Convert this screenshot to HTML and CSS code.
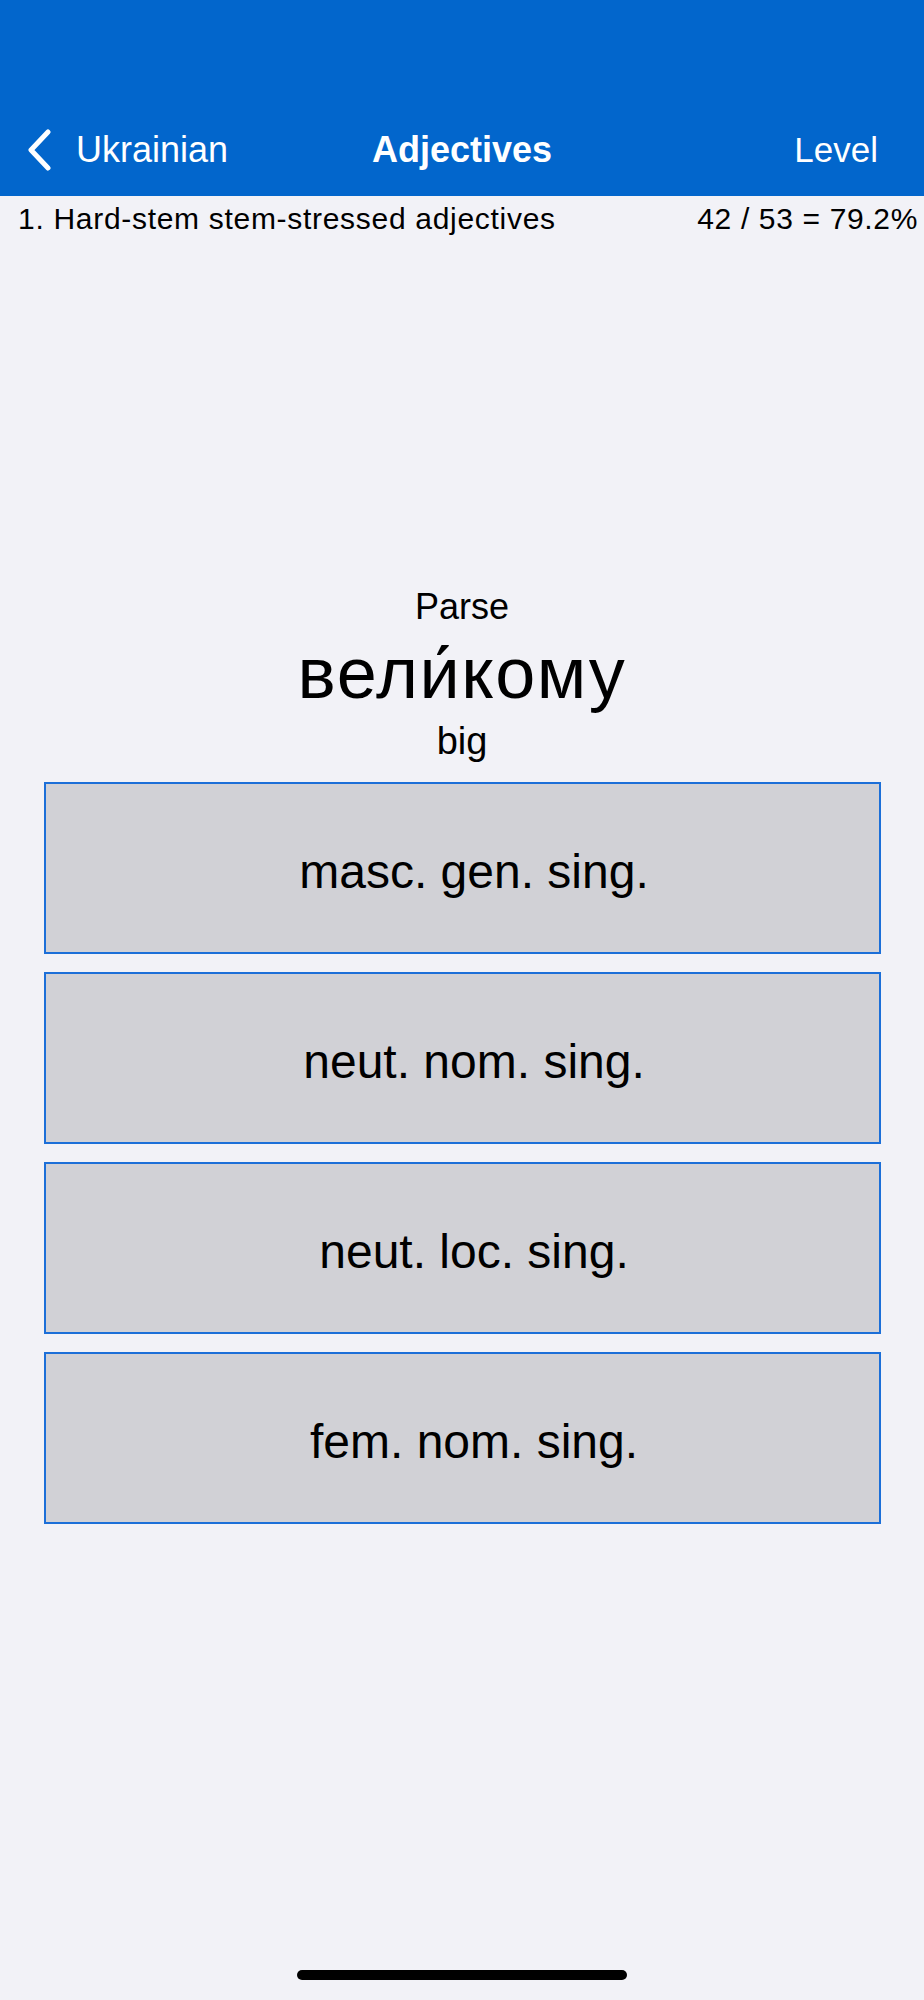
FILE: index.html
```html
<!DOCTYPE html>
<html lang="en">
<head>
<meta charset="utf-8">
<title>Adjectives</title>
<link rel="stylesheet" href="styles.css">
</head>
<body>
<header class="navbar">
  <div class="nav-row">
    <div class="nav-left">
      <svg class="chevron" width="26" height="42" viewBox="0 0 26 42" aria-hidden="true">
        <path d="M21 3 L4 21 L21 39" fill="none" stroke="#ffffff" stroke-width="5" stroke-linecap="round" stroke-linejoin="round"/>
      </svg>
      <span class="back-label">Ukrainian</span>
    </div>
    <div class="nav-title">Adjectives</div>
    <div class="nav-right">Level</div>
  </div>
</header>
<div class="status-row">
  <span class="lesson">1. Hard-stem stem-stressed adjectives</span>
  <span class="score">42 / 53 = 79.2%</span>
</div>
<main class="quiz">
  <div class="prompt">Parse</div>
  <div class="word">вели́кому</div>
  <div class="gloss">big</div>
  <div class="choices">
    <button class="choice">masc. gen. sing.</button>
    <button class="choice">neut. nom. sing.</button>
    <button class="choice">neut. loc. sing.</button>
    <button class="choice">fem. nom. sing.</button>
  </div>
</main>
<div class="home-indicator"></div>
</body>
</html>
```

FILE: styles.css
```css
html, body {
  margin: 0;
  padding: 0;
}
body {
  background: #f2f2f7;
  font-family: "Liberation Sans", Arial, sans-serif;
  color: #000;
  width: 924px;
  min-height: 2000px;
}
.navbar {
  background: #0266cc;
  height: 196px;
  padding-top: 103px;
  box-sizing: border-box;
}
.nav-row {
  height: 93px;
  display: grid;
  grid-template-columns: 1fr auto 1fr;
  align-items: center;
  color: #fff;
  font-size: 36px;
}
.nav-left {
  display: flex;
  align-items: center;
  padding-left: 27px;
  gap: 23px;
}
.chevron {
  display: block;
}
.nav-title {
  font-weight: bold;
  text-align: center;
}
.nav-right {
  text-align: right;
  padding-right: 46px;
  font-size: 35px;
}
.status-row {
  display: flex;
  justify-content: space-between;
  height: 40px;
  padding: 6px 6px 0 18px;
  box-sizing: border-box;
  font-size: 30px;
  line-height: 34px;
}
.lesson {
  letter-spacing: 0.7px;
}
.score {
  letter-spacing: 0.65px;
}
.quiz {
  margin-top: 350px;
  display: flex;
  flex-direction: column;
  align-items: center;
}
.prompt {
  font-size: 36px;
  line-height: 41px;
}
.word {
  font-size: 72px;
  line-height: 76px;
  letter-spacing: 1.6px;
  margin-top: 8px;
}
.gloss {
  font-size: 38px;
  line-height: 41px;
  margin-top: 10px;
}
.choices {
  margin-top: 20px;
  width: 837px;
  display: flex;
  flex-direction: column;
  gap: 18px;
}
.choice {
  height: 172px;
  box-sizing: border-box;
  background: #d1d1d6;
  border: 2px solid #1c6fd8;
  border-radius: 0;
  font-family: "Liberation Sans", Arial, sans-serif;
  font-size: 48px;
  color: #000;
  padding: 6px 0 0 24px;
  display: flex;
  align-items: center;
  justify-content: center;
}
.home-indicator {
  width: 330px;
  height: 10px;
  border-radius: 5px;
  background: #000;
  margin: 446px auto 0;
}
```
